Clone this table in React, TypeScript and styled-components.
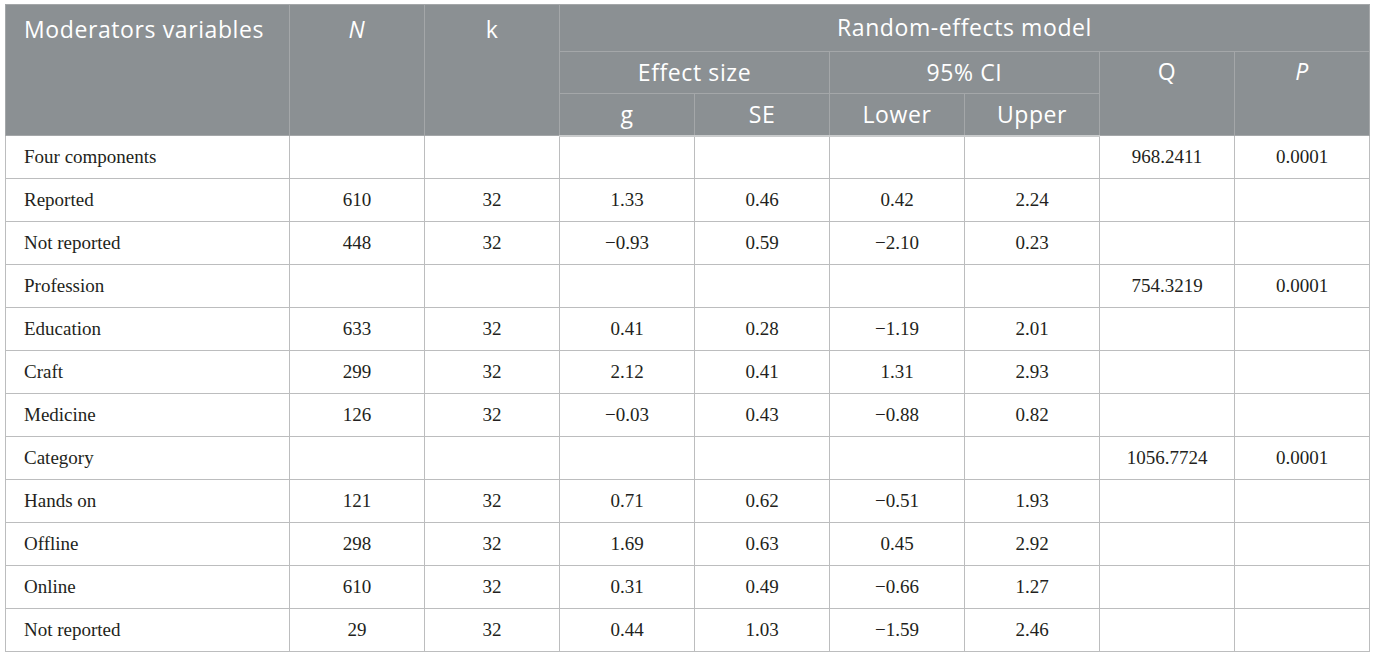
import styled, { createGlobalStyle } from 'styled-components'

const GlobalStyle = createGlobalStyle`
  html, body {
    margin: 0;
    padding: 0;
    background: #ffffff;
  }
`

type Row = {
  label: string
  n?: string
  k?: string
  g?: string
  se?: string
  lower?: string
  upper?: string
  q?: string
  p?: string
}

const rows: Row[] = [
  { label: 'Four components', q: '968.2411', p: '0.0001' },
  { label: 'Reported', n: '610', k: '32', g: '1.33', se: '0.46', lower: '0.42', upper: '2.24' },
  { label: 'Not reported', n: '448', k: '32', g: '\u22120.93', se: '0.59', lower: '\u22122.10', upper: '0.23' },
  { label: 'Profession', q: '754.3219', p: '0.0001' },
  { label: 'Education', n: '633', k: '32', g: '0.41', se: '0.28', lower: '\u22121.19', upper: '2.01' },
  { label: 'Craft', n: '299', k: '32', g: '2.12', se: '0.41', lower: '1.31', upper: '2.93' },
  { label: 'Medicine', n: '126', k: '32', g: '\u22120.03', se: '0.43', lower: '\u22120.88', upper: '0.82' },
  { label: 'Category', q: '1056.7724', p: '0.0001' },
  { label: 'Hands on', n: '121', k: '32', g: '0.71', se: '0.62', lower: '\u22120.51', upper: '1.93' },
  { label: 'Offline', n: '298', k: '32', g: '1.69', se: '0.63', lower: '0.45', upper: '2.92' },
  { label: 'Online', n: '610', k: '32', g: '0.31', se: '0.49', lower: '\u22120.66', upper: '1.27' },
  { label: 'Not reported', n: '29', k: '32', g: '0.44', se: '1.03', lower: '\u22121.59', upper: '2.46' },
]

export default function App() {
  return (
    <Page>
      <GlobalStyle />
      <Table>
        <colgroup>
          <col style={{ width: 284 }} />
          {Array.from({ length: 8 }).map((_, i) => (
            <col key={i} style={{ width: 135 }} />
          ))}
        </colgroup>
        <thead>
          <tr>
            <Th rowSpan={3} $align="left" $top>Moderators variables</Th>
            <Th rowSpan={3} $top $italic>N</Th>
            <Th rowSpan={3} $top>k</Th>
            <Th colSpan={6} $h={47}>Random-effects model</Th>
          </tr>
          <tr>
            <Th colSpan={2} $h={42}>Effect size</Th>
            <Th colSpan={2}>95% CI</Th>
            <Th rowSpan={2} $top $sub>Q</Th>
            <Th rowSpan={2} $top $sub $italic>P</Th>
          </tr>
          <tr>
            <Th $h={42}>g</Th>
            <Th>SE</Th>
            <Th>Lower</Th>
            <Th>Upper</Th>
          </tr>
        </thead>
        <tbody>
          {rows.map((r, i) => (
            <tr key={i}>
              <Td $align="left">{r.label}</Td>
              <Td>{r.n}</Td>
              <Td>{r.k}</Td>
              <Td>{r.g}</Td>
              <Td>{r.se}</Td>
              <Td>{r.lower}</Td>
              <Td>{r.upper}</Td>
              <Td>{r.q}</Td>
              <Td>{r.p}</Td>
            </tr>
          ))}
        </tbody>
      </Table>
    </Page>
  )
}

const Page = styled.div`
  padding: 4px 5px;
`

const Table = styled.table`
  width: 1365px;
  table-layout: fixed;
  border-collapse: collapse;
  border: 1px solid #b9bbbc;
`

const Th = styled.th<{ $align?: 'left' | 'center'; $top?: boolean; $italic?: boolean; $h?: number; $sub?: boolean }>`
  background: #8b9093;
  color: #ffffff;
  font-family: 'Open Sans', Lato, sans-serif;
  font-weight: 400;
  font-size: 23px;
  letter-spacing: 0.6px;
  font-style: ${({ $italic }) => ($italic ? 'italic' : 'normal')};
  text-align: ${({ $align }) => $align ?? 'center'};
  vertical-align: ${({ $top }) => ($top ? 'top' : 'middle')};
  padding: ${({ $align, $top, $sub }) =>
    $top ? ($sub ? '7px 8px 0 8px' : '12px 18px 0 18px') : $align === 'left' ? '0 18px' : '0 8px'};
  height: ${({ $h }) => ($h ? `${$h}px` : 'auto')};
  border: 1px solid #a4a7a9;
  line-height: 1.1;
  box-sizing: border-box;
  thead tr:last-child & {
    border-bottom: 2px solid #c9cbcc;
  }
`

const Td = styled.td<{ $align?: 'left' | 'center' }>`
  font-family: 'Liberation Serif', 'Times New Roman', serif;
  font-size: 19px;
  color: #231f20;
  text-align: ${({ $align }) => $align ?? 'center'};
  padding: 0 ${({ $align }) => ($align === 'left' ? '18px' : '8px')};
  height: 43px;
  box-sizing: border-box;
  border: 1px solid #bcbdbe;
`
